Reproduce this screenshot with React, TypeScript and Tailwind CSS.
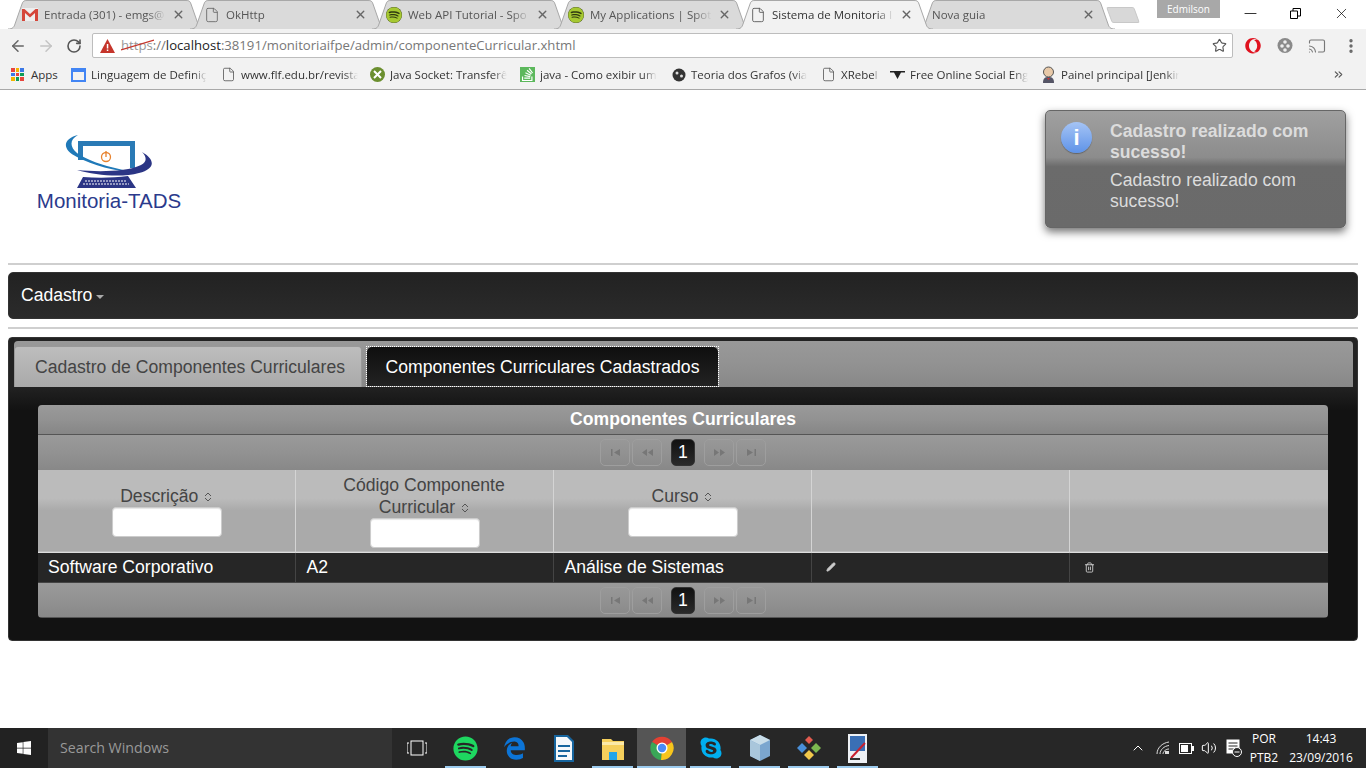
import { ReactNode } from "react";
import { ArrowLeft, ArrowRight, RotateCw, Star, File, X, MoreVertical, Cast, ChevronUp, Volume2, ChevronsRight, Minus, Pencil, Trash2 } from "lucide-react";
import { FaSpotify, FaSkype, FaWindows, FaEdgeLegacy, FaStackOverflow, FaOpera } from "react-icons/fa6";

const uiFont = "font-['Open_Sans','Noto_Sans',sans-serif]";
const pageFont = "font-['Liberation_Sans',Arial,sans-serif]";

function SpotifyDot() {
    return <span className="w-4 h-4 rounded-full bg-[#2f3a10] flex items-center justify-center shrink-0"><FaSpotify className="w-4 h-4 text-[#a6c832]" /></span>;
}

function GmailIcon() {
    return (
        <svg width="16" height="13" viewBox="0 0 16 13" className="shrink-0">
            <rect x="0" y="0" width="16" height="13" fill="#eee" />
            <path d="M0 13V1h2.500L8 6l5.500-5H16v12h-3V5L8 9.500 3 5v8z" fill="#d5463a" />
        </svg>
    );
}

const tabs: { icon: ReactNode; title: string; active?: boolean }[] = [
    { icon: <GmailIcon />, title: "Entrada (301) - emgs@" },
    { icon: <File className="w-4 h-4 text-[#666] shrink-0" strokeWidth={1.3} />, title: "OkHttp" },
    { icon: <SpotifyDot />, title: "Web API Tutorial - Spo" },
    { icon: <SpotifyDot />, title: "My Applications | Spot" },
    { icon: <File className="w-4 h-4 text-[#555] shrink-0" strokeWidth={1.3} />, title: "Sistema de Monitoria I", active: true },
    { icon: null, title: "Nova guia" },
];

function BrowserTab({ icon, title, active }: { icon: ReactNode; title: string; active?: boolean }) {
    return (
        <div className={`relative w-[197px] h-[29px] -mr-[15px] flex items-center pl-[14px] pr-[12px] gap-[6px] text-[11.500px] ${active ? "z-10 text-[#333]" : "text-[#555]"}`}>
            <svg className="absolute inset-0" width="197" height="29" viewBox="0 0 197 29">
                <path d="M0 29 C5 29 6 27 7 24 L14 4 C15 1 16 .5 19 .5 H178 C181 .5 182 1 183 4 L190 24 C191 27 192 29 197 29" fill={active ? "#f2f2f2" : "#dadada"} stroke="#a8a8a8" />
            </svg>
            <span className="relative flex items-center gap-[6px] min-w-0 flex-1">
                {icon}
                <span className="whitespace-nowrap overflow-hidden flex-1 [mask-image:linear-gradient(to_right,black_85%,transparent)]">{title}</span>
            </span>
            <X className="relative w-[13px] h-[13px] text-[#666] shrink-0 mr-[8px]" strokeWidth={2.6} />
        </div>
    );
}

function TitleBar() {
    return (
        <div className={`h-[29px] flex bg-white relative ${uiFont}`}>
            <div className="flex pl-[8px]">
                {tabs.map((t) => <BrowserTab key={t.title} {...t} />)}
            </div>
            <div className="ml-[9px] mt-[7px] w-[28px] h-[16px] bg-[#d8d8d8] border border-[#c8c8c8] rounded-[2px] skew-x-[20deg]" />
            <div className="ml-auto flex items-start">
                <div className="w-[63px] h-[18px] mr-[7px] bg-[#a8a8a8] text-[10px] text-white text-center leading-[18px]">Edmilson</div>
                <div className="w-[47px] h-[27px] flex items-center justify-center"><Minus className="w-[19px] h-[19px] text-black" strokeWidth={1} /></div>
                <div className="w-[42px] h-[27px] flex items-center justify-center">
                    <svg width="11" height="11" viewBox="0 0 11 11"><path d="M.5 3h7v7.500h-7zM3 3V.5h7.500V8H8" fill="none" stroke="#000" /></svg>
                </div>
                <div className="w-[50px] h-[27px] flex items-center justify-center"><X className="w-[17px] h-[17px] text-black" strokeWidth={1} /></div>
            </div>
        </div>
    );
}

function Toolbar() {
    return (
        <div className={`h-[33px] bg-[#f2f2f2] flex items-center ${uiFont}`}>
            <ArrowLeft className="ml-[9px] w-[18px] h-[18px] text-[#666]" strokeWidth={2} />
            <ArrowRight className="ml-[10px] w-[18px] h-[18px] text-[#c4c4c4]" strokeWidth={2} />
            <RotateCw className="ml-[11px] w-[16px] h-[16px] text-[#555]" strokeWidth={2.4} />
            <div className="ml-[10px] w-[1141px] h-[25px] bg-white border border-[#bdbdbd] rounded-[2px] flex items-center text-[13.150px] text-[#777] pl-[7px]">
                <svg width="15" height="14" viewBox="0 0 15 14"><path d="M7.500 0 15 14H0z" fill="#c5352b" /><rect x="6.800" y="5" width="1.500" height="4.500" fill="#fff" /><rect x="6.800" y="10.500" width="1.500" height="1.500" fill="#fff" /></svg>
                <span className="ml-[6px] relative text-[#999]">
                    https
                    <svg className="absolute left-0 top-[2px]" width="33" height="14" viewBox="0 0 33 14"><path d="M0 12 33 2" stroke="#c5352b" strokeWidth="1.200" /></svg>
                </span>
                <span>://</span><span className="text-[#222]">localhost</span><span>:38191/monitoriaifpe/admin/componenteCurricular.xhtml</span>
                <Star className="ml-auto mr-[5px] w-[15px] h-[15px] text-[#555]" strokeWidth={1.8} />
            </div>
            <FaOpera className="ml-[12px] w-[16px] h-[16px] text-[#e0121f]" />
            <svg className="ml-[16px]" width="16" height="17" viewBox="0 0 16 17"><circle cx="8" cy="8.500" r="7.500" fill="#8a8a8a" /><circle cx="8" cy="5" r="1.800" fill="#eee" /><circle cx="5" cy="9" r="1.800" fill="#eee" /><circle cx="11" cy="9" r="1.800" fill="#eee" /><circle cx="8" cy="13" r="1.800" fill="#eee" /></svg>
            <Cast className="ml-[15px] w-[18px] h-[18px] text-[#777]" strokeWidth={1.5} />
            <MoreVertical className="ml-[16px] w-[18px] h-[18px] text-[#666]" strokeWidth={2.5} />
        </div>
    );
}

function AppsGrid() {
    const colors = ["#e8453c", "#f4b400", "#3b78e7", "#3b78e7", "#e8453c", "#0f9d58", "#f4b400", "#0f9d58", "#e8453c"];
    return (
        <div className="grid grid-cols-3 gap-[1px] w-[13px] h-[13px] shrink-0">
            {colors.map((c, i) => <span key={i} className="w-[3.660px] h-[3.660px]" style={{ background: c }} />)}
        </div>
    );
}

function Bookmark({ icon, label, width }: { icon: ReactNode; label: string; width: string }) {
    return (
        <div className={`flex items-center gap-[5px] shrink-0 pr-[12px] ${width}`}>
            <span className="w-[15px] flex justify-center shrink-0">{icon}</span>
            <span className="whitespace-nowrap overflow-hidden [mask-image:linear-gradient(to_right,black_88%,transparent)]">{label}</span>
        </div>
    );
}

function BookmarksBar() {
    const doc = <File className="w-[15px] h-[15px] text-[#555]" strokeWidth={1.3} />;
    return (
        <div className={`h-[28px] pb-[2px] bg-[#f2f2f2] border-b border-[#a9a9a9] flex items-center pl-[11px] text-[11.500px] text-[#333] ${uiFont}`}>
            <AppsGrid />
            <span className="ml-[7px] w-[40px]">Apps</span>
            <Bookmark width="w-[150px]" label="Linguagem de Definiç" icon={<span className="w-[15px] h-[14px] border-2 border-[#4285f4] border-t-[4px] block" />} />
            <Bookmark width="w-[149px]" label="www.flf.edu.br/revista" icon={doc} />
            <Bookmark width="w-[150px]" label="Java Socket: Transferê" icon={<svg width="15" height="15" viewBox="0 0 15 15"><circle cx="7.500" cy="7.500" r="7.500" fill="#6b8f2f" /><path d="M4 4l7 7M11 4l-7 7" stroke="#fff" strokeWidth="2" /></svg>} />
            <Bookmark width="w-[151px]" label="java - Como exibir um" icon={<FaStackOverflow className="w-[15px] h-[15px] text-white bg-[#5cb85c]" />} />
            <Bookmark width="w-[150px]" label="Teoria dos Grafos (via" icon={<svg width="14" height="14" viewBox="0 0 14 14"><circle cx="7" cy="7" r="6.500" fill="#333" /><circle cx="5" cy="5" r="1.500" fill="#ddd" /><circle cx="9.500" cy="8" r="1.500" fill="#ddd" /></svg>} />
            <Bookmark width="w-[69px]" label="XRebel" icon={doc} />
            <Bookmark width="w-[151px]" label="Free Online Social Eng" icon={<svg width="15" height="8" viewBox="0 0 15 8"><path d="M0 0h15v1.500H11L7.500 8 4 1.500H0z" fill="#222" /></svg>} />
            <Bookmark width="w-[150px]" label="Painel principal [Jenkir" icon={<svg width="15" height="17" viewBox="0 0 15 17"><circle cx="7.500" cy="6" r="5" fill="#e8c9a8" stroke="#555" /><path d="M2 17c0-5 2-6 5.500-6S13 12 13 17z" fill="#556" /><path d="M6 12h3l-1.500 2z" fill="#c33" /></svg>} />
            <ChevronsRight className="ml-auto mr-[21px] w-[13px] h-[13px] text-[#555]" strokeWidth={2} />
        </div>
    );
}

function Logo() {
    return (
        <div className="flex flex-col items-center w-[146px]">
            <svg width="88" height="53" viewBox="0 0 88 53">
                <path d="M13 6 H70 V33 H65 V11 H18 V25 H13Z" fill="#2a7ab5" />
                <circle cx="41" cy="22" r="4.500" fill="none" stroke="#e8832f" strokeWidth="1.300" />
                <path d="M41 16v6" stroke="#e8832f" strokeWidth="1.300" />
                <path d="M13 0 C-3 4 -3 15 12 22 C28 30 50 37 70 37 C50 34 24 27 12 18 C5 12 4 5 13 0Z" fill="#1f79b8" />
                <path d="M77 17 C91 25 90 34 74 38 C56 43 30 40 12 35 C32 37 62 37 76 30 C82 27 82 22 77 17Z" fill="#2b3585" />
                <path d="M12 53 L18 42 C32 43 48 43 63 41 L71 53Z" fill="#2b3585" />
                <path d="M20 46h42M18 49h46" stroke="#fff" strokeWidth="1" strokeDasharray="2 1" />
            </svg>
            <span className={`text-[20.500px] leading-[20px] mt-[3px] text-[#2b3a8c] whitespace-nowrap ${pageFont}`}>Monitoria-TADS</span>
        </div>
    );
}

function Growl() {
    return (
        <div className={`absolute left-[1045px] top-[110px] w-[301px] h-[118px] rounded-[5px] border border-[#666] shadow-[0_4px_8px_rgba(0,0,0,0.55)] bg-[linear-gradient(to_bottom,#a0a0a0_0%,#8c8c8c_40%,#6b6b6b_48%,#6a6a6a_100%)] flex text-[17.600px] leading-[21px] text-[#dcdcdc] ${pageFont}`}>
            <div className="ml-[15px] mt-[11px] w-[31px] h-[31px] rounded-full bg-[linear-gradient(to_bottom,#a5c4f5,#5f93e8)] shadow-[0_1px_1px_rgba(0,0,0,0.3)] flex items-center justify-center text-white font-bold text-[22px] shrink-0">i</div>
            <div className="ml-[18px] mt-[10px] w-[230px]">
                <p className="font-bold">Cadastro realizado com sucesso!</p>
                <p className="mt-[7px]">Cadastro realizado com sucesso!</p>
            </div>
        </div>
    );
}

function SortArrows() {
    return (
        <svg className="inline-block ml-[6px]" width="8" height="10" viewBox="0 0 8 10">
            <path d="M1 4 4 1l3 3M1 6l3 3 3-3" fill="none" stroke="#555" strokeWidth="1" />
        </svg>
    );
}

function PagerButton({ d }: { d: string }) {
    return (
        <span className="w-[30px] h-[27px] rounded-[5px] border border-[#9e9e9e] flex items-center justify-center">
            <svg width="11" height="7" viewBox="0 0 11 7"><path d={d} fill="#777" /></svg>
        </span>
    );
}

function Paginator({ className }: { className: string }) {
    return (
        <div className={`flex items-center justify-center bg-[linear-gradient(to_bottom,#9a9a9a,#929292_50%,#888888)] ${className}`}>
            <div className="flex gap-[2px]">
                <PagerButton d="M1 0h1.500v7H1zM10 0v7L4 3.500z" />
                <PagerButton d="M5 0v7L0 3.500zM11 0v7L6 3.500z" />
            </div>
            <span className="mx-[9px] w-[24px] h-[27px] rounded-[5px] border border-[#333] bg-[linear-gradient(to_bottom,#111,#2a2a2a)] text-white text-[17.600px] flex items-center justify-center">1</span>
            <div className="flex gap-[2px]">
                <PagerButton d="M0 0v7l5-3.500zM6 0v7l5-3.500z" />
                <PagerButton d="M1 0v7l6-3.500zM8.500 0H10v7H8.500z" />
            </div>
        </div>
    );
}

const filterInput = "block mx-auto w-[110px] h-[30px] translate-x-[1px] bg-white rounded-[4px] border border-[#ccc] shadow-[inset_0_1px_1px_rgba(0,0,0,0.1)]";

function ComponentesTable() {
    const th = "w-[258px] first:w-[257px] last:w-[259px] border-l border-[#d4d4d4] first:border-l-0 font-normal leading-[22px] text-[#444] align-middle";
    const td = "border-l border-[#444] first:border-l-0 pl-[11px] first:pl-[10px] pr-[10px] text-left text-white font-normal";
    return (
        <div className="mx-[29px] mt-[18px] rounded-[4px] overflow-hidden">
            <div className="h-[30px] bg-[linear-gradient(to_bottom,#9a9a9a,#929292_50%,#868686)] border-b border-[#555] flex items-center justify-center font-bold text-white">Componentes Curriculares</div>
            <Paginator className="h-[35px]" />
            <table className="w-[1290px] table-fixed border-collapse">
                <thead>
                    <tr className="h-[82px] bg-[linear-gradient(to_bottom,#bbbbbb,#bbbbbb_35%,#aaaaaa_50%,#aaaaaa)] border-b border-[#dddddd]">
                        <th className={th}>Descrição<SortArrows /><input className={filterInput} /></th>
                        <th className={th}><span className="block w-[200px] mx-auto">Código Componente Curricular<SortArrows /></span><input className={filterInput} /></th>
                        <th className={th}>Curso<SortArrows /><input className={filterInput} /></th>
                        <th className={th}></th>
                        <th className={th}></th>
                    </tr>
                </thead>
                <tbody>
                    <tr className="h-[30px] bg-[#262626]">
                        <td className={td}>Software Corporativo</td>
                        <td className={td}>A2</td>
                        <td className={td}>Análise de Sistemas</td>
                        <td className={td}><Pencil className="ml-[3px] w-[10px] h-[10px] text-[#ccc]" fill="#ccc" /></td>
                        <td className={td}><Trash2 className="ml-[3px] w-[11px] h-[11px] text-[#ccc]" /></td>
                    </tr>
                </tbody>
            </table>
            <Paginator className="h-[36px] border-t border-b border-t-[#444] border-b-[#555]" />
        </div>
    );
}

function TabView() {
    return (
        <div className={`mx-[8px] h-[304px] rounded-[4px] bg-[linear-gradient(to_bottom,#222_16%,#1a1a1a_20%,#121212_24%)] border border-[#333] text-[17.600px] ${pageFont}`}>
            <div className="ml-[5px] mr-[4px] mt-[3px] h-[46px] rounded-t-[4px] bg-[linear-gradient(to_bottom,#999999,#929292_50%,#888888)] flex items-end gap-[4px]">
                <div className="w-[348px] h-[41px] pl-[4px] pt-[1px] rounded-t-[4px] border border-[#999] border-b-0 bg-[linear-gradient(to_bottom,#bdbdbd,#a9a9a9)] text-[#444] flex items-center justify-center whitespace-nowrap">Cadastro de Componentes Curriculares</div>
                <div className="w-[353px] h-[41px] border border-dotted border-white">
                    <div className="h-full pt-[1px] rounded-t-[5px] bg-[linear-gradient(to_bottom,#0f0f0f,#222)] text-white flex items-center justify-center whitespace-nowrap">Componentes Curriculares Cadastrados</div>
                </div>
            </div>
            <ComponentesTable />
        </div>
    );
}

function Taskbar() {
    const running = "absolute bottom-0 left-[4px] right-[4px] h-[2px] bg-[#9ccbee]";
    const app = "relative w-[49px] h-[40px] flex items-center justify-center shrink-0";
    return (
        <div className={`h-[40px] bg-[#272727] flex items-center text-white ${uiFont}`}>
            <div className="w-[48px] h-full bg-[#222] flex items-center justify-center"><FaWindows className="w-[16px] h-[16px]" /></div>
            <div className="w-[344px] h-full bg-[#333] flex items-center pl-[12px] text-[14.200px] text-[#999]">Search Windows</div>
            <div className={app}><svg width="20" height="16" viewBox="0 0 20 16"><rect x="4" y="1" width="12" height="14" fill="none" stroke="#fff" /><path d="M2 3H0v10h2M18 3h2v10h-2" fill="none" stroke="#fff" /></svg></div>
            <div className={app}><FaSpotify className="w-[25px] h-[25px] text-[#1ed760]" /><span className={running} /></div>
            <div className={app}><FaEdgeLegacy className="w-[23px] h-[23px] text-[#0c74d6]" /></div>
            <div className={app}><svg width="20" height="27" viewBox="0 0 20 27"><path d="M0 0h14l6 6v21H0z" fill="#17659e" /><path d="M2 2h11l5 5v18H2z" fill="#f5f8fb" /><rect x="4" y="10" width="12" height="2" fill="#17659e" /><rect x="4" y="15" width="12" height="2" fill="#17659e" /><rect x="4" y="20" width="9" height="2" fill="#17659e" /></svg></div>
            <div className={app}><svg width="22" height="23" viewBox="0 0 22 23"><path d="M0 2h9l2 2h11v19H0z" fill="#f5cf5c" /><rect y="5" width="22" height="3" fill="#fbe9a8" /><path d="M7 23v-8h8v8z" fill="#23a5e8" /></svg><span className={running} /></div>
            <div className={`${app} bg-[#555]`}><svg width="24" height="24" viewBox="0 0 24 24"><path d="M12 12 2 6a12 12 0 0 1 20 0z" fill="#e34133" /><path d="M12 12 2 6a12 12 0 0 0 9 18z" fill="#3aa757" /><path d="M12 12 22 6a12 12 0 0 1-11 18z" fill="#f8c51c" /><circle cx="12" cy="12" r="5.500" fill="#fff" /><circle cx="12" cy="12" r="4.200" fill="#4b8bf5" /></svg><span className="absolute bottom-0 inset-x-0 h-[2px] bg-[#9ccbee]" /></div>
            <div className={app}><FaSkype className="w-[24px] h-[24px] text-[#00aff0]" /><span className={running} /></div>
            <div className={app}><svg width="20" height="26" viewBox="0 0 20 26"><path d="M10 0 20 5v16l-10 5L0 21V5z" fill="#7ba6cf" /><path d="M10 0 20 5 10 10 0 5z" fill="#c9dde9" /><path d="M10 10v16L0 21V5z" fill="#a9c6db" /></svg><span className={running} /></div>
            <div className={app}><svg width="24" height="24" viewBox="0 0 24 24"><path d="M12 0l4 4-4 4-4-4z" fill="#e25b4f" /><path d="M0 12l5-5 5 5-5 5z" fill="#4a8fd8" /><path d="M14 12l5-5 5 5-5 5z" fill="#7cb850" /><path d="M12 24l-5-5 5-5 5 5z" fill="#f2c84b" /></svg><span className={running} /></div>
            <div className={app}><svg width="19" height="29" viewBox="0 0 19 29"><rect width="19" height="29" fill="#eef1f5" /><rect x="2" y="2" width="15" height="15" fill="#3a6fb5" /><path d="M3 24 17 9" stroke="#c8202f" strokeWidth="2" /><rect x="2" y="24" width="10" height="2" fill="#333" /></svg><span className={running} /></div>
            <div className="ml-auto flex items-center text-[12px] text-white">
                <ChevronUp className="w-[16px] h-[16px]" strokeWidth={1.5} />
                <svg className="ml-[10px]" width="14" height="14" viewBox="0 0 14 14"><path d="M1 13C1 7 6 2 13 1M4 13C4 9 8 5 13 4.500M7 13c0-2.500 3-5 6-5" fill="none" stroke="#ddd" strokeWidth="1" /><rect x="9" y="10" width="4" height="3" fill="#ddd" /></svg>
                <svg className="ml-[9px]" width="15" height="11" viewBox="0 0 15 11"><rect x=".5" y=".5" width="12" height="10" fill="none" stroke="#fff" /><rect x="2" y="2" width="7" height="7" fill="#fff" /><rect x="13" y="3" width="2" height="5" fill="#fff" /></svg>
                <Volume2 className="ml-[7px] w-[16px] h-[16px]" strokeWidth={1.5} />
                <svg className="ml-[9px]" width="16" height="19" viewBox="0 0 16 19"><rect x=".5" y=".5" width="13" height="14" fill="#fff" /><path d="M2.500 4h9M2.500 7h9M2.500 10h5" stroke="#272727" /><circle cx="11" cy="13" r="4.500" fill="#272727" stroke="#fff" /><path d="M8.500 13h5" stroke="#fff" /></svg>
                <div className="ml-[2px] w-[40px] text-center leading-[19px]"><div>POR</div><div>PTB2</div></div>
                <div className="w-[74px] mr-[8px] text-center leading-[19px]"><div>14:43</div><div>23/09/2016</div></div>
            </div>
        </div>
    );
}

export default function App() {
    return (
        <div className="relative w-[1366px] h-[768px] overflow-hidden flex flex-col bg-white">
            <TitleBar />
            <Toolbar />
            <BookmarksBar />
            <main className="flex-1 min-h-0">
                <div className="pl-[36px] pt-[45px] h-[173px]"><Logo /></div>
                <div className="mx-[8px] h-[2px] bg-[#cfcfcf]" />
                <div className={`mx-[8px] mt-[7px] h-[47px] rounded-[5px] bg-[linear-gradient(to_bottom,#222,#2b2b2b)] border border-[#333] flex items-center pl-[12px] text-[17.600px] text-white ${pageFont}`}>
                    Cadastro<span className="ml-[4px] mt-[2px] w-0 h-0 border-x-[4px] border-x-transparent border-t-[4px] border-t-[#aaa]" />
                </div>
                <div className="mx-[8px] mt-[8px] mb-[8px] h-[2px] bg-[#cfcfcf]" />
                <TabView />
            </main>
            <Taskbar />
            <Growl />
        </div>
    );
}
